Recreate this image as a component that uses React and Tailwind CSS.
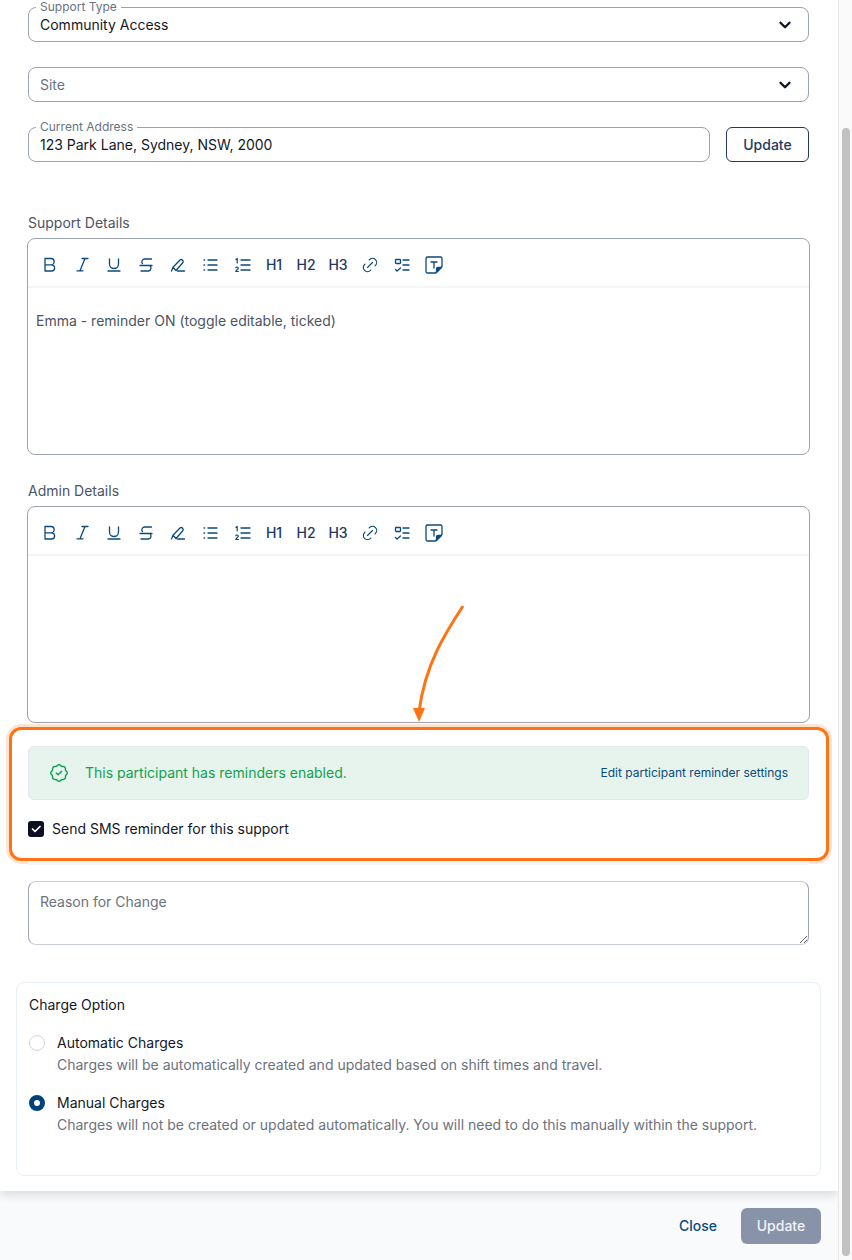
import { TbLink, TbRosetteDiscountCheck, TbChevronDown, TbCheck } from "react-icons/tb";

// toolbar icons, all drawn on the same 20x20 box
const ToolIcon = ({ children }) => (
  <span className="w-8 h-8 flex items-center justify-center">
    <svg width="20" height="20" viewBox="0 0 20 20" fill="none" stroke="currentColor" strokeWidth="1.3" strokeLinecap="round" strokeLinejoin="round">
      {children}
    </svg>
  </span>
);

const Toolbar = () => {
  return (
    <div className="flex items-center h-[49px] px-[6px] pt-[5px] border-b-2 border-[#f3f5f8] text-[#0b4a7a]">
      <ToolIcon>
        <path d="M5 3.5H11a3.1 3.1 0 0 1 0 6.3H5M11.5 9.8a3.1 3.1 0 0 1 0 6.2H5V3.5" />
      </ToolIcon>
      <ToolIcon>
        <path d="M10 3.5H16M5 15.8H11M13 3.5L8 15.8" />
      </ToolIcon>
      <ToolIcon>
        <path d="M5.5 4V9a4.5 4.5 0 0 0 9 0V4M4 16H16" />
      </ToolIcon>
      <ToolIcon>
        <path d="M15.5 4H9a2.9 2.9 0 0 0-2.6 4.6M4 10.5H16M13.4 10.5a2.9 2.9 0 0 1-1 5.5H5" />
      </ToolIcon>
      <ToolIcon>
        <path d="M3.5 16L5 12.2L12 5a2 2 0 0 1 2.8 2.8L8 15.5L5 12.2M9.5 16H16.5" />
      </ToolIcon>
      <ToolIcon>
        <path d="M8 5H17M8 10H17M8 15H17M4 5H4.6M4 10H4.6M4 15H4.6" />
      </ToolIcon>
      <ToolIcon>
        <path d="M9 5H18M9 10H18M9 15H18" />
        <path d="M4 4.5L5.2 3.5V8" strokeWidth="1.2" />
        <path d="M3.8 12.8a1.3 1.3 0 0 1 2.5.4c0 .9-2.5 2.3-2.5 3.3H6.4" strokeWidth="1.2" />
      </ToolIcon>
      {["H1", "H2", "H3"].map((h) => (
        <span key={h} className="w-8 h-8 flex items-center justify-center text-sm font-medium text-[#1e3a5f]">
          {h}
        </span>
      ))}
      <span className="w-8 h-8 flex items-center justify-center">
        <TbLink size={20} strokeWidth={1.4} />
      </span>
      <ToolIcon>
        <rect x="3.5" y="4.5" width="5" height="4" rx="0.8" />
        <path d="M3.5 14.5L5 16L8.5 13M11 5H17M11 10H17M11 15H17" />
      </ToolIcon>
      <ToolIcon>
        <path d="M11.5 18H3.5A1.5 1.5 0 0 1 2 16.5V3.5A1.5 1.5 0 0 1 3.5 2H16.5A1.5 1.5 0 0 1 18 3.5V11.5Z" />
        <path d="M17.5 12.5L12.5 17.5V14A1.5 1.5 0 0 1 14 12.5Z" fill="currentColor" />
        <path d="M7 7H13M10 7V13" />
      </ToolIcon>
    </div>
  );
};

const Editor = ({ children }) => (
  <div className="-mx-px h-[217px] border border-[#9ca3af] rounded-lg bg-white">
    <Toolbar />
    <div className="px-2 pt-[23px] text-sm leading-5 text-[#4b5563]">{children}</div>
  </div>
);

const Legend = ({ children }) => (
  <span className="absolute left-[7px] -top-[9px] px-[4px] bg-white text-xs leading-[16px] text-[#6b7280]">
    {children}
  </span>
);

const SelectBox = ({ label, value, placeholder }) => (
  <div className="relative h-[35px] flex items-center justify-between pl-[11px] pr-[14px] border border-[#9ca3af] rounded-lg bg-white">
    {label && <Legend>{label}</Legend>}
    <span className={`text-sm ${value ? "text-[#111827]" : "text-[#6b7280]"}`}>{value || placeholder}</span>
    <TbChevronDown size={18} strokeWidth={3.2} className="text-[#111827]" />
  </div>
);

const RadioRow = ({ checked, title, desc }) => (
  <div className="flex gap-3">
    <span
      className={
        checked
          ? "mt-[2px] w-4 h-4 rounded-full border-[5px] border-[#00437a] bg-white shrink-0"
          : "mt-[2px] w-4 h-4 rounded-full border border-[#d1d5db] bg-white shrink-0"
      }
    />
    <div>
      <div className="text-sm leading-5 text-[#111827]">{title}</div>
      <div className="mt-[2px] text-sm leading-5 text-[#6b7280]">{desc}</div>
    </div>
  </div>
);

const App = () => {
  return (
    <div className="flex h-[1260px] w-[852px] overflow-hidden bg-white font-['Inter',sans-serif]">
      <div className="relative w-[838px] flex flex-col overflow-hidden">
        <div className="relative z-10 flex-1 pt-[7px] pl-7 pr-[29px] bg-white shadow-[0_3px_10px_rgba(0,0,0,0.14)]">
          <SelectBox label="Support Type" value="Community Access" />
          <div className="mt-[25px]">
            <SelectBox placeholder="Site" />
          </div>
          <div className="mt-[25px] flex gap-4">
            <div className="relative flex-1 h-[35px] flex items-center pl-[11px] border border-[#9ca3af] rounded-lg">
              <Legend>Current Address</Legend>
              <span className="text-sm text-[#111827]">123 Park Lane, Sydney, NSW, 2000</span>
            </div>
            <button className="w-[83px] h-[35px] border border-[#1e3a5f] rounded-md text-sm font-medium text-[#1e3a5f]">
              Update
            </button>
          </div>

          <div className="mt-[51px] mb-[5px] text-sm leading-5 text-[#4b5563]">Support Details</div>
          <Editor>Emma - reminder ON (toggle editable, ticked)</Editor>

          <div className="mt-[26px] mb-[5px] text-sm leading-5 text-[#4b5563]">Admin Details</div>
          <Editor />

          <div className="-ml-[19px] -mr-[20px] mt-1 h-[134px] border-[3px] border-[#ff7314] rounded-xl pl-4 pr-[17px] pt-4 ring-[3px] ring-[#ffe4d4] bg-white">
            <div className="h-[54px] flex items-center justify-between pl-[19px] pr-5 bg-[#e6f4ed] border border-[#e2e8f0] rounded-md">
              <div className="flex items-center gap-[15px]">
                <TbRosetteDiscountCheck size={22} strokeWidth={1.6} className="text-[#12a150]" />
                <span className="text-sm text-[#12a150]">This participant has reminders enabled.</span>
              </div>
              <span className="text-xs text-[#0b4a7a]">Edit participant reminder settings</span>
            </div>
            <label className="mt-[19px] flex items-center gap-2 text-sm text-[#111827]">
              <span className="w-4 h-4 rounded-[3px] bg-[#0b1020] flex items-center justify-center text-white">
                <TbCheck size={12} strokeWidth={3.5} />
              </span>
              Send SMS reminder for this support
            </label>
          </div>
          <div className="h-1 bg-[#f3f5f8]" />

          <textarea
            placeholder="Reason for Change"
            className="block mt-4 w-full h-[64px] px-[11px] py-[10px] text-sm leading-5 border border-[#9ca3af] border-t-[#c9cdd4] border-b-[#c9cdd4] rounded-lg placeholder:text-[#6b7280] outline-none"
          />

          <div className="-ml-3 mt-[37px] w-[805px] h-[194px] border border-[#e8eef5] rounded-lg px-3 pt-3">
            <div className="text-sm leading-5 text-[#111827]">Charge Option</div>
            <div className="mt-[18px] flex flex-col gap-[18px]">
              <RadioRow
                title="Automatic Charges"
                desc="Charges will be automatically created and updated based on shift times and travel."
              />
              <RadioRow
                checked
                title="Manual Charges"
                desc="Charges will not be created or updated automatically. You will need to do this manually within the support."
              />
            </div>
          </div>
        </div>

        <div className="h-[69px] shrink-0 flex items-center justify-end gap-6 pr-[17px] pt-[1px] bg-[#f8fafc]">
          <span className="text-sm font-medium text-[#0b4a7a]">Close</span>
          <button className="w-20 h-9 rounded-md bg-[#8893aa] text-sm font-medium text-[#f1f3f7]">Update</button>
        </div>

        {/* annotation arrow */}
        <svg className="absolute left-0 top-0 z-20 pointer-events-none" width="838" height="1260" fill="none">
          <path d="M463 606 C446 632 425 664 419 712" stroke="#ff7314" strokeWidth="3" />
          <polygon points="413,708 425,708 419,722" fill="#ff7314" />
        </svg>
      </div>

      <div className="w-[14px] shrink-0 border-l border-[#e8e8e8] bg-[#fafafa] pt-[128px] pl-[3px]">
        <div className="w-2 h-[1128px] rounded-full bg-[#c1c1c1]" />
      </div>
    </div>
  );
};

export default App;
